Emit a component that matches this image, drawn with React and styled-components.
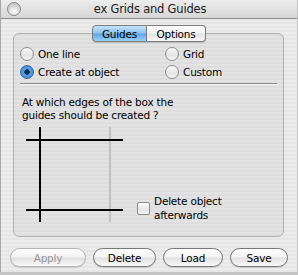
import React from 'react'
import styled, { createGlobalStyle } from 'styled-components'

const GlobalStyle = createGlobalStyle`
  html, body {
    margin: 0;
    padding: 0;
    background: #c4c4c4;
  }
  body {
    font-family: "DejaVu Sans", "Liberation Sans", sans-serif;
    font-size: 10.5px;
    letter-spacing: -0.2px;
    color: #000;
  }
`

const Window = styled.div`
  width: 298px;
  height: 272px;
  box-sizing: border-box;
  border-left: 1px solid #a8a8a8;
  border-right: 1px solid #c4c4c4;
  background: repeating-linear-gradient(
    to bottom,
    #ececec 0px,
    #ececec 2px,
    #e6e6e6 2px,
    #e6e6e6 4px
  );
  display: flex;
  flex-direction: column;
`

const TitleBar = styled.div`
  height: 19px;
  box-sizing: border-box;
  border-bottom: 1px solid #8e8e8e;
  background: linear-gradient(#ededed, #d6d6d6);
  display: flex;
  align-items: center;
  padding-left: 6px;
`

const CloseDot = styled.span`
  width: 12px;
  height: 12px;
  border-radius: 50%;
  border: 1px solid #8a8a8a;
  background: radial-gradient(circle at 50% 70%, #ffffff, #c9c9c9 70%);
  flex: none;
`

const Title = styled.div`
  flex: 1;
  text-align: center;
  font-size: 11.5px;
  color: #1c1c1c;
  margin-right: 18px;
`

const Body = styled.div`
  padding-top: 6px;
  display: flex;
  flex-direction: column;
`

const TabBar = styled.div`
  display: flex;
  justify-content: center;
  margin-bottom: -9px;
  position: relative;
  z-index: 1;
`

const Tab = styled.div`
  width: ${p => p.$w}px;
  height: 17px;
  box-sizing: border-box;
  display: flex;
  align-items: center;
  justify-content: center;
  border: 1px solid #7d7d7d;
  border-left-width: ${p => (p.$first ? 1 : 0)}px;
  border-radius: ${p => (p.$first ? '4px 0 0 4px' : '0 4px 4px 0')};
  background: ${p =>
    p.$active
      ? 'linear-gradient(#c6e3fb 0%, #8fc4f2 45%, #5ea8ea 55%, #9ad0fb 100%)'
      : 'linear-gradient(#ffffff 0%, #f3f3f3 45%, #e3e3e3 55%, #f7f7f7 100%)'};
  box-shadow: 0 1px 1px rgba(0, 0, 0, 0.15);
`

const GroupBox = styled.div`
  margin: 0 13px 0 12px;
  height: 204px;
  box-sizing: border-box;
  border: 1px solid #b0b0b0;
  border-radius: 6px;
  background: rgba(0, 0, 0, 0.035);
  padding: 13px 5px 0 6px;
  display: flex;
  flex-direction: column;
`

const RadioGrid = styled.div`
  display: grid;
  grid-template-columns: 145px 1fr;
  row-gap: 4px;
`

const RadioItem = styled.label`
  display: flex;
  align-items: center;
  gap: 4px;
  height: 14px;
`

const RadioCircle = styled.span`
  width: 14px;
  height: 14px;
  box-sizing: border-box;
  border-radius: 50%;
  border: 1px solid ${p => (p.$checked ? '#3b6fa8' : '#8c8c8c')};
  background: ${p =>
    p.$checked
      ? 'radial-gradient(circle at 50% 50%, #0e2d55 0, #0e2d55 2.5px, #5fa8ec 3px, #2f7bd0 7px)'
      : 'linear-gradient(#fbfbfb, #e4e4e4 60%, #f6f6f6)'};
  flex: none;
`

const Separator = styled.div`
  height: 1px;
  background: #8c8c8c;
  border-bottom: 1px solid #f4f4f4;
  margin: 4px 1px 0 0;
`

const Question = styled.p`
  margin: 11px 0 0 2px;
  line-height: 13px;
`

const FigureRow = styled.div`
  display: flex;
  align-items: flex-end;
  margin: 5px 0 0 6px;
  gap: 14px;
`

const CheckItem = styled.label`
  display: flex;
  align-items: center;
  gap: 4px;
  margin-bottom: 1px;
`

const CheckBox = styled.span`
  width: 13px;
  height: 13px;
  box-sizing: border-box;
  border: 1px solid #8c8c8c;
  border-radius: 2px;
  background: linear-gradient(#fdfdfd, #e6e6e6 60%, #f4f4f4);
  flex: none;
`

const CheckLabel = styled.span`
  line-height: 14px;
`

const ButtonRow = styled.div`
  display: flex;
  gap: 7px;
  padding-left: 9px;
  margin-top: 11px;
`

const Button = styled.div`
  width: ${p => p.$w}px;
  height: 19px;
  box-sizing: border-box;
  border-radius: 10px;
  border: 1px solid ${p => (p.$disabled ? '#b4b4b4' : '#777')};
  background: linear-gradient(#ffffff 0%, #f4f4f4 45%, #e2e2e2 55%, #fafafa 100%);
  color: ${p => (p.$disabled ? '#9a9a9a' : '#000')};
  display: flex;
  align-items: center;
  justify-content: center;
  box-shadow: 0 1px 1px rgba(0, 0, 0, 0.12);
`

const EdgesFigure = () => (
  <svg width="97" height="96" viewBox="0 0 97 96">
    <line x1="84" y1="0" x2="84" y2="95" stroke="#c2c2c2" strokeWidth="2" />
    <line x1="0" y1="13" x2="97" y2="13" stroke="#000" strokeWidth="2" />
    <line x1="0" y1="83" x2="97" y2="83" stroke="#000" strokeWidth="2" />
    <line x1="14" y1="0" x2="14" y2="95" stroke="#000" strokeWidth="2" />
  </svg>
)

const Radio = ({ checked, children }) => (
  <RadioItem>
    <RadioCircle $checked={checked} />
    {children}
  </RadioItem>
)

export default function App() {
  return (
    <>
      <GlobalStyle />
      <Window>
        <TitleBar>
          <CloseDot />
          <Title>ex Grids and Guides</Title>
        </TitleBar>
        <Body>
          <TabBar>
            <Tab $w={55} $first $active>Guides</Tab>
            <Tab $w={59}>Options</Tab>
          </TabBar>
          <GroupBox>
            <RadioGrid>
              <Radio>One line</Radio>
              <Radio>Grid</Radio>
              <Radio checked>Create at object</Radio>
              <Radio>Custom</Radio>
            </RadioGrid>
            <Separator />
            <Question>
              At which edges of the box the<br />
              guides should be created ?
            </Question>
            <FigureRow>
              <EdgesFigure />
              <CheckItem>
                <CheckBox />
                <CheckLabel>
                  Delete object<br />
                  afterwards
                </CheckLabel>
              </CheckItem>
            </FigureRow>
          </GroupBox>
          <ButtonRow>
            <Button $w={76} $disabled>Apply</Button>
            <Button $w={63}>Delete</Button>
            <Button $w={60}>Load</Button>
            <Button $w={58}>Save</Button>
          </ButtonRow>
        </Body>
      </Window>
    </>
  )
}
